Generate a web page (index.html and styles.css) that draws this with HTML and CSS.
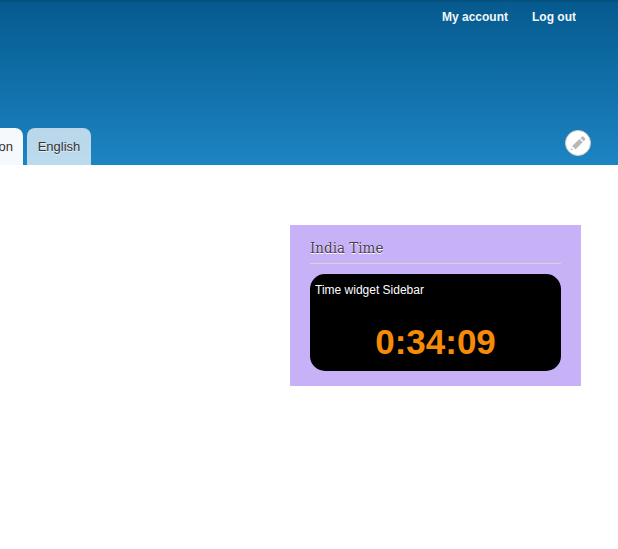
FILE: index.html
```html
<!DOCTYPE html>
<html lang="en">
<head>
<meta charset="utf-8">
<title>India Time</title>
<link rel="stylesheet" href="styles.css">
</head>
<body>
<header class="header">
  <nav class="account"><a>My account</a><a>Log out</a></nav>
  <div class="bar">
    <nav class="tabs"><a class="tab active">on</a><a class="tab">English</a></nav>
    <button class="edit" aria-label="Edit"><svg width="26" height="26" viewBox="0 0 26 26"><circle cx="13" cy="13" r="12.5" fill="#fff" stroke="#ccc"/><path d="M6 18l2 2H6zM7.3 15.8l7.2-6.8 3.2 3.2-7 7-1.2-.5-.2-1.2-1.5-.4zM15.4 8l1.8-1.6q.5-.4 1 0l2 2q.5.6 0 1.1l-1.6 1.7z" fill="#b8b8b8"/></svg></button>
  </div>
</header>
<main class="main">
  <aside class="block">
    <h2 class="title">India Time</h2>
    <div class="widget"><div class="label">Time widget Sidebar</div><div class="clock">0:34:09</div></div>
  </aside>
</main>
</body>
</html>
```
FILE: styles.css
```css
* { box-sizing: border-box; }
body { margin: 0; background: #fff; font-family: "Liberation Sans", Arial, sans-serif; overflow: hidden; }
.header { height: 165px; display: flex; flex-direction: column; justify-content: space-between; background: linear-gradient(rgba(0,0,0,.15), transparent 3px), linear-gradient(#055a8e, #1d84c3); }
.account { display: flex; justify-content: flex-end; gap: 24px; padding: 10px 42px 0 0; font-size: 12px; line-height: 15px; font-weight: bold; color: #f2f7fa; }
.account a { transform: scaleY(1.1); }
.bar { display: flex; justify-content: space-between; padding-right: 27px; }
.tabs { display: flex; gap: 4px; height: 37px; }
.tab { width: 64px; border-radius: 8px 8px 0 0; background: rgba(255,255,255,.7); color: #333; font-size: 13px; line-height: 37px; text-align: center; text-shadow: 0 1px #eee; }
.active { width: 23px; background: #f6f9fc; display: flex; justify-content: flex-end; padding-right: 10px; border-top-left-radius: 0; }
.edit { width: 26px; height: 26px; padding: 0; border: 0; background: none; margin-top: 2px; }
.edit svg { display: block; }
.main { display: flex; justify-content: flex-end; padding: 60px 37px 0 0; }
.block { width: 291px; height: 161px; padding: 14px 20px 15px; background: #c7b2f8; }
.title { margin: 0 0 10px; height: 25px; border-bottom: 1px solid #d5d5d2; font: normal 15px/19px "DejaVu Serif Condensed", "DejaVu Serif", serif; font-stretch: condensed; color: #483d50; text-shadow: 0 1px 0 #fff; }
.widget { height: 97px; padding: 8px 5px; border-radius: 15px; background: #000; }
.label { color: #fff; font-size: 12px; line-height: 16px; }
.clock { color: #f58b08; font-size: 35px; font-weight: bold; line-height: 40px; text-align: center; margin-top: 24px; }
```
